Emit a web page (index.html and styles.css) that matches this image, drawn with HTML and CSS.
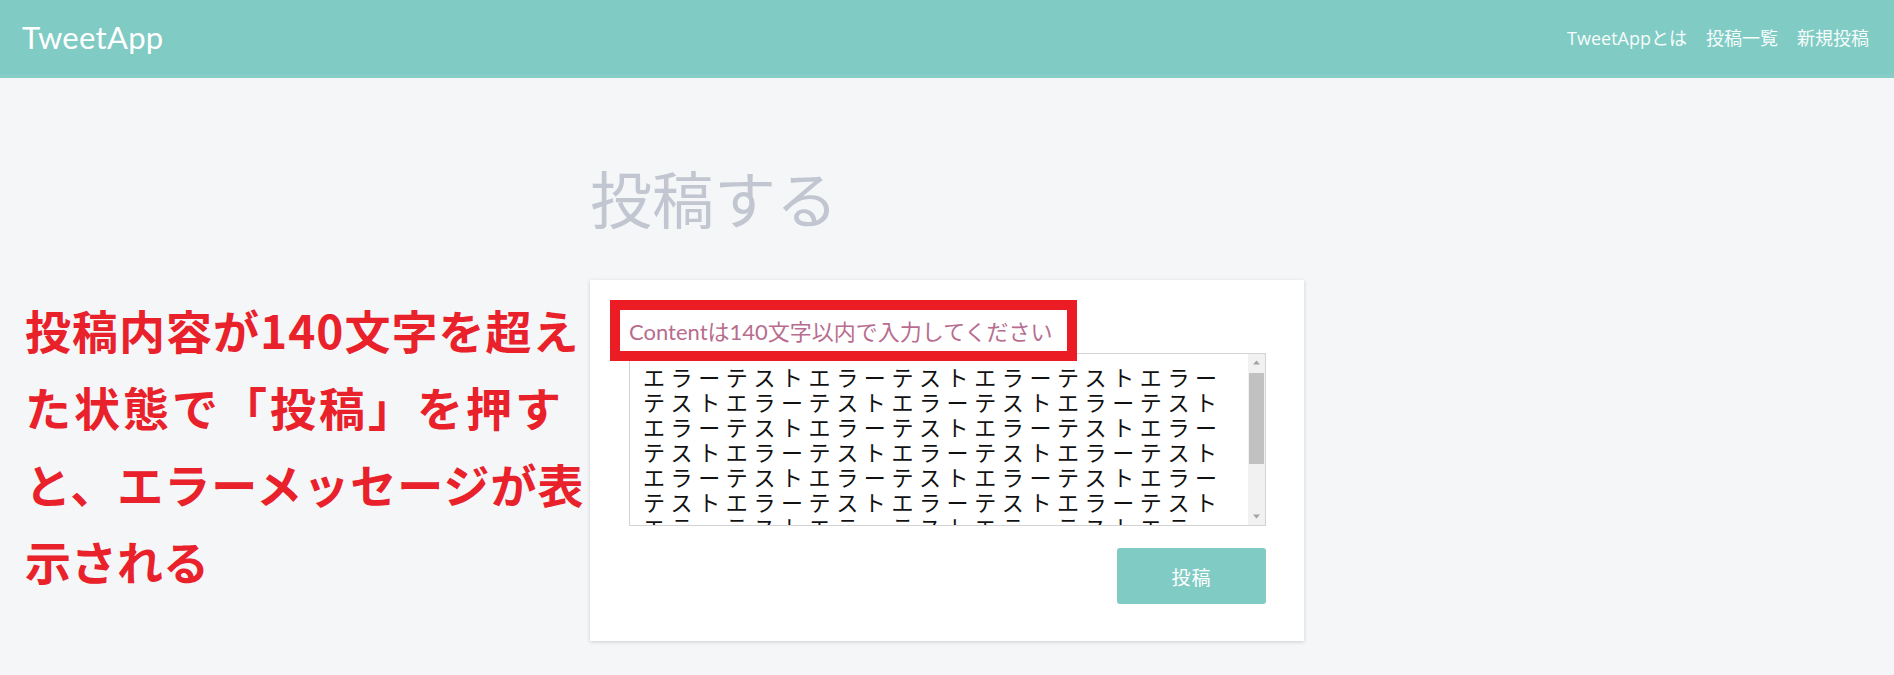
FILE: index.html
```html
<!DOCTYPE html>
<html lang="ja">
<head>
<meta charset="utf-8">
<title>TweetApp</title>
<link rel="stylesheet" href="styles.css">
</head>
<body>
<header class="header">
  <div class="logo">TweetApp</div>
  <nav class="nav">
    <a class="nav-link" href="#">TweetAppとは</a>
    <a class="nav-link" href="#">投稿一覧</a>
    <a class="nav-link" href="#">新規投稿</a>
  </nav>
</header>
<main class="main">
  <div class="container">
    <h1 class="title">投稿する</h1>
    <div class="card">
      <div class="error-wrap">
        <p class="error">Contentは140文字以内で入力してください</p>
        <span class="highlight"></span>
      </div>
      <div class="field">
        <textarea class="content">エラーテストエラーテストエラーテストエラーテストエラーテストエラーテストエラーテストエラーテストエラーテストエラーテストエラーテストエラーテストエラーテストエラーテストエラーテストエラーテストエラーテストエラーテストエラーテストエラーテストエラーテストエラーテストエラーテストエラーテストエラーテストエラーテストエラーテストエラーテストエラーテストエラーテストエラーテストエラーテストエラーテストエラーテスト</textarea>
        <div class="scrollbar">
          <span class="sb-btn"><svg width="17" height="17" viewBox="0 0 17 17"><path d="M5 10.5 L8.5 6.5 L12 10.5 Z" fill="#a3a3a3"/></svg></span>
          <div class="sb-track"><span class="sb-thumb"></span></div>
          <span class="sb-btn"><svg width="17" height="17" viewBox="0 0 17 17"><path d="M5 6.5 L8.5 10.5 L12 6.5 Z" fill="#a3a3a3"/></svg></span>
        </div>
      </div>
      <div class="actions">
        <button class="btn" type="button">投稿</button>
      </div>
    </div>
  </div>
  <p class="note"><span class="note-line">投稿内容が140文字を超え</span><span class="note-line note-line--wide">た状態で「投稿」を押す</span><span class="note-line">と、エラーメッセージが表</span><span class="note-line note-line--tight">示される</span></p>
</main>
</body>
</html>
```
FILE: styles.css
```css
html, body {
  margin: 0;
  padding: 0;
}
body {
  background: #f5f6f8;
  font-family: Lato, "Noto Sans CJK JP", sans-serif;
  min-height: 100vh;
}
.header {
  height: 74px;
  border-bottom: 4px solid #86cdc7;
  background: #80cbc4;
  display: flex;
  align-items: center;
  justify-content: space-between;
  padding: 0 25px 0 22px;
}
.logo {
  color: #ffffff;
  font-size: 31px;
  font-family: Lato, "Noto Sans CJK JP", sans-serif;
  letter-spacing: 0.3px;
}
.nav {
  display: flex;
  gap: 19px;
}
.nav-link {
  color: #f6fcfb;
  text-decoration: none;
  font-size: 18px;
  font-family: "Open Sans", "Noto Sans CJK JP", sans-serif;
}
.main {
  position: relative;
}
.container {
  width: 714px;
  margin: 0 auto;
  padding-top: 83px;
}
.title {
  margin: 0 0 47px;
  font-size: 62px;
  line-height: 72px;
  font-weight: 400;
  color: #c1c6d0;
  font-family: "Noto Sans CJK JP", sans-serif;
}
.card {
  background: #ffffff;
  padding: 37px 38px 37px 39px;
  box-shadow: 0 1px 4px rgba(0, 0, 0, 0.16);
}
.error-wrap {
  position: relative;
  margin-bottom: 6px;
}
.error {
  margin: 0;
  font-size: 22px;
  line-height: 30px;
  color: #b86d8e;
  font-family: Lato, "Noto Sans CJK JP", sans-serif;
}
.highlight {
  position: absolute;
  left: -19px;
  top: -17px;
  width: 467px;
  height: 61px;
  box-sizing: border-box;
  border: 10px solid #ec1c24;
}
.field {
  display: flex;
  width: 637px;
  height: 173px;
  box-sizing: border-box;
  border: 1px solid #d3d3d3;
  background: #ffffff;
}
.content {
  flex: 1;
  min-width: 0;
  height: 100%;
  box-sizing: border-box;
  margin: 0;
  border: none;
  padding: 10px 20px 10px 13px;
  font-family: "Noto Sans CJK JP", sans-serif;
  font-size: 22px;
  line-height: 25px;
  letter-spacing: 5.6px;
  color: #111111;
  background: #ffffff;
  resize: none;
  overflow: hidden;
  outline: none;
  scrollbar-width: none;
}
.scrollbar {
  width: 17px;
  display: flex;
  flex-direction: column;
  background: #f1f1f1;
}
.sb-btn {
  display: block;
  height: 17px;
  flex: none;
}
.sb-btn svg {
  display: block;
}
.sb-track {
  flex: 1;
  padding: 2px 1px 0;
}
.sb-thumb {
  display: block;
  height: 91px;
  background: #c1c1c1;
}
.actions {
  display: flex;
  justify-content: flex-end;
  margin-top: 22px;
}
.btn {
  width: 149px;
  height: 56px;
  background: #80cbc4;
  color: #ffffff;
  border: none;
  border-radius: 3px;
  font-family: "Noto Sans CJK JP", sans-serif;
  font-size: 19px;
  letter-spacing: 1px;
  padding: 0;
}
.note {
  position: absolute;
  left: 25px;
  top: 213px;
  margin: 0;
  font-family: "Noto Sans CJK JP", sans-serif;
  font-weight: 700;
  font-size: 46px;
  line-height: 77px;
  letter-spacing: 1px;
  color: #e8212a;
}
.note-line {
  display: block;
  white-space: nowrap;
}
.note-line--wide {
  letter-spacing: 3px;
}
.note-line--tight {
  letter-spacing: 0;
}
```
